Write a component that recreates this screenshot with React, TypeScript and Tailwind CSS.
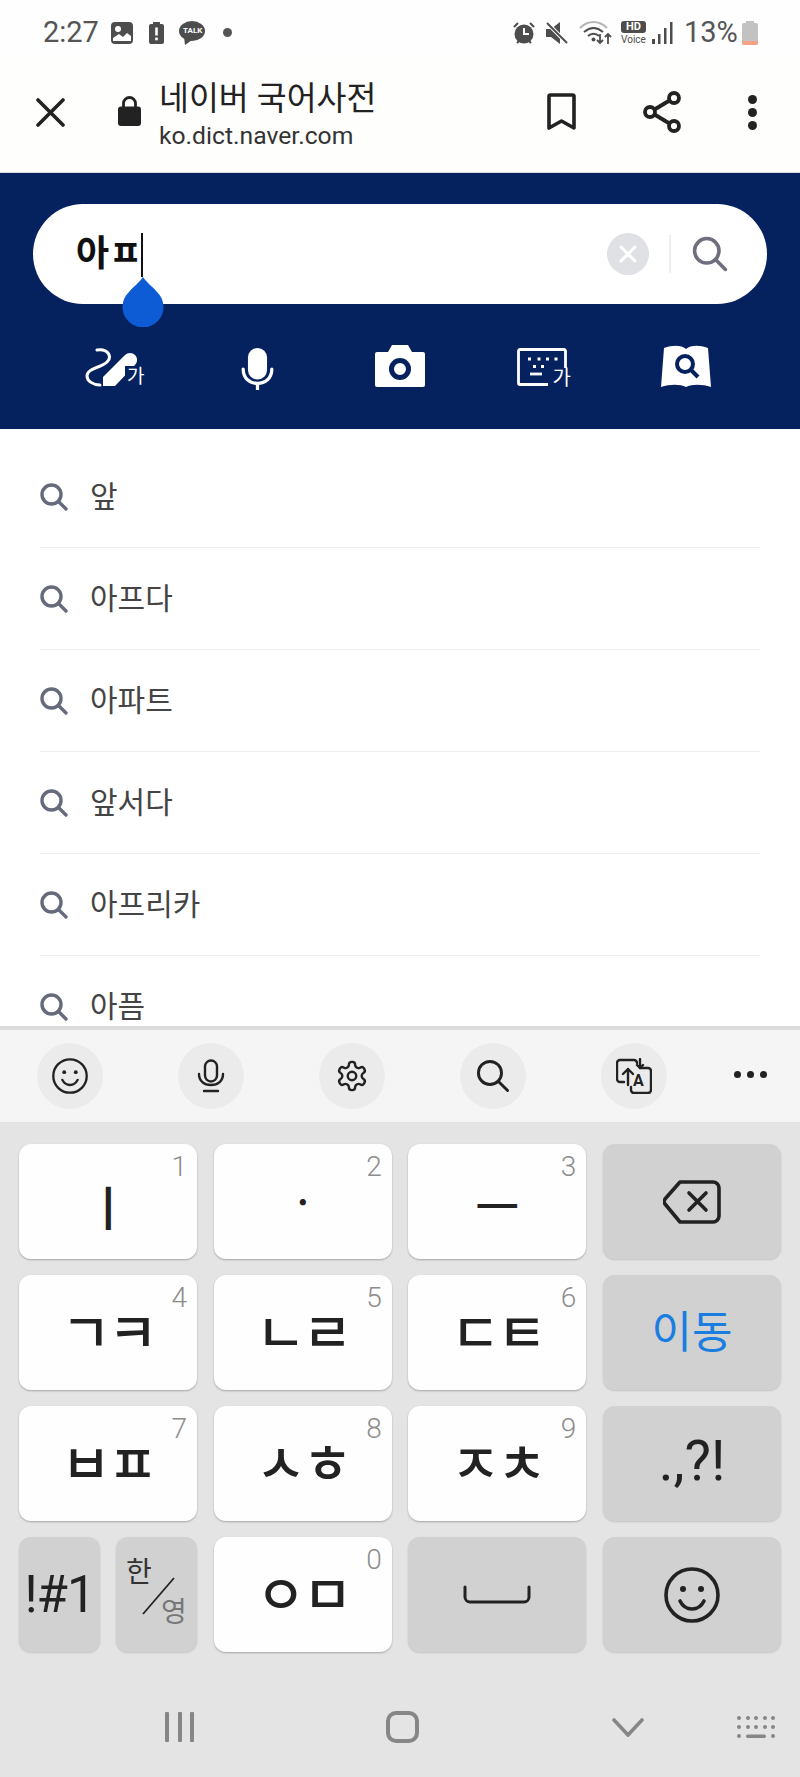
import React from "react";

const FONT = "font-['Roboto','Noto_Sans_CJK_KR',sans-serif]";

function SearchGlyph({ size = 28, color = "#666b7c", sw = 3.4 }: { size?: number; color?: string; sw?: number }) {
  return (
    <svg width={size} height={size} viewBox="0 0 28 28" fill="none" stroke={color} strokeWidth={sw} strokeLinecap="round">
      <circle cx="11.5" cy="11.5" r="9.5" />
      <path d="M18.5 18.5L26 26" />
    </svg>
  );
}

function Smile({ size, sw }: { size: number; sw: number }) {
  return (
    <svg width={size} height={size} viewBox="0 0 56 56" fill="none" stroke="#222" strokeWidth={sw} strokeLinecap="round">
      <circle cx="28" cy="28" r="26" />
      <circle cx="19" cy="22" r="3" fill="#222" stroke="none" />
      <circle cx="37" cy="22" r="3" fill="#222" stroke="none" />
      <path d="M16 34c3 6 8 8 12 8s9-2 12-8" />
    </svg>
  );
}

function Row({ text }: { text: string }) {
  return (
    <div className="h-[102px] mx-[40px] border-b border-[#eeeeee] flex items-center gap-[22px] shrink-0">
      <SearchGlyph />
      <span className="text-[30px] leading-none text-[#444444]">{text}</span>
    </div>
  );
}

function Key({ label, num, size = 54, spacing = "tracking-[-3px] mt-[4px]" }: { label: string; num: string; size?: number; spacing?: string }) {
  return (
    <div className="relative h-[115px] rounded-[12px] bg-[#fefefe] shadow-[0_1px_2px_rgba(0,0,0,0.28)] flex items-center justify-center">
      <span className={`text-[#222222] leading-none font-medium ${spacing}`} style={{ fontSize: size }}>{label}</span>
      <span className="absolute right-[10px] top-[6px] text-[28px] leading-[34px] font-light text-[#8c8c8c]">{num}</span>
    </div>
  );
}

function FnKey({ children, className = "" }: { children: React.ReactNode; className?: string }) {
  return (
    <div className={`relative h-[115px] rounded-[12px] bg-[#d1d1d1] shadow-[0_1px_2px_rgba(0,0,0,0.15)] flex items-center justify-center ${className}`}>
      {children}
    </div>
  );
}

function ToolCircle({ children }: { children: React.ReactNode }) {
  return <div className="w-[66px] h-[66px] rounded-full bg-[#ebebeb] flex items-center justify-center shrink-0">{children}</div>;
}

export default function App() {
  return (
    <div className={`${FONT} w-[800px] h-[1777px] flex flex-col overflow-hidden bg-white`}>
      {/* status bar */}
      <div className="h-[56px] bg-[#fefefe] flex items-center pl-[43px] pt-[9px] text-[#555555] shrink-0">
        <span className="text-[29px] leading-none w-[55px]">2:27</span>
        <svg className="ml-[13px]" width="22" height="22" viewBox="0 0 22 22">
          <rect width="22" height="22" rx="4" fill="#4d4d4d" />
          <circle cx="7" cy="7" r="3" fill="#fff" />
          <path d="M2 19v-3l6-4 4 3 4-4 4 3v5z" fill="#fff" />
        </svg>
        <svg className="ml-[16px]" width="15" height="22" viewBox="0 0 15 22">
          <path d="M4 0h7v2h2a2 2 0 012 2v16a2 2 0 01-2 2H2a2 2 0 01-2-2V4a2 2 0 012-2h2z" fill="#4d4d4d" />
          <rect x="6.2" y="5.5" width="2.6" height="8" fill="#fff" />
          <rect x="6.2" y="15.5" width="2.6" height="2.8" fill="#fff" />
        </svg>
        <div className="ml-[15px] relative w-[26px] h-[24px]">
          <svg width="26" height="24" viewBox="0 0 26 24">
            <ellipse cx="13" cy="10" rx="13" ry="10" fill="#4d4d4d" />
            <path d="M5 16l1 8 7-5z" fill="#4d4d4d" />
          </svg>
          <span className="absolute left-[4px] top-[5px] text-[8px] leading-[10px] font-bold text-white">TALK</span>
        </div>
        <div className="ml-[18px] w-[9px] h-[9px] rounded-full bg-[#555555]" />
        <div className="ml-auto flex items-center pr-[42px]">
          <svg width="22" height="24" viewBox="0 0 22 24">
            <circle cx="11" cy="13" r="9.5" fill="#4d4d4d" />
            <path d="M1 6l4-4M21 6l-4-4M4 22l2-2M18 22l-2-2" stroke="#4d4d4d" strokeWidth="2" />
            <path d="M11 7v6h5" stroke="#fff" strokeWidth="2" fill="none" />
          </svg>
          <svg className="ml-[11px]" width="22" height="24" viewBox="0 0 22 24">
            <path d="M0 8h5l9-7v22l-9-7H0z" fill="#4d4d4d" />
            <path d="M1 2l20 20" stroke="#fefefe" strokeWidth="4" />
            <path d="M1 2l20 20" stroke="#4d4d4d" strokeWidth="2" />
          </svg>
          <svg className="ml-[11px]" width="33" height="24" viewBox="0 0 33 24" fill="none">
            <path d="M1 7c8-8 19-8 27 0" stroke="#b5b5b5" strokeWidth="2" />
            <path d="M5 11c6-5 13-5 19 0" stroke="#4d4d4d" strokeWidth="2" />
            <path d="M9 15c3-3 8-3 11 0" stroke="#4d4d4d" strokeWidth="2" />
            <circle cx="14.5" cy="18.5" r="2" fill="#4d4d4d" />
            <path d="M21 13v9m-3-3l3 3 3-3M29 23v-10m-3 3l3-3 3 3" stroke="#4d4d4d" strokeWidth="1.8" />
          </svg>
          <div className="ml-[9px] w-[25px] flex flex-col items-center">
            <span className="w-[25px] h-[12px] rounded-[3px] bg-[#4d4d4d] text-white text-[11px] leading-[12px] font-bold text-center">HD</span>
            <span className="text-[10px] leading-[11px] mt-[1px] text-[#4d4d4d]">Voice</span>
          </div>
          <svg className="ml-[6px]" width="21" height="22" viewBox="0 0 21 22" fill="#4d4d4d">
            <rect x="0" y="17" width="3" height="5" />
            <rect x="6" y="12" width="2.5" height="10" />
            <rect x="12" y="6" width="2.5" height="16" />
            <rect x="18" y="0" width="2.5" height="22" />
          </svg>
          <span className="ml-[11px] text-[29px] leading-none w-[53px]">13%</span>
          <svg className="ml-[5px]" width="16" height="24" viewBox="0 0 16 24">
            <path d="M4 0h8v2h2a2 2 0 012 2v18a2 2 0 01-2 2H2a2 2 0 01-2-2V4a2 2 0 012-2h2z" fill="#c2c2c2" />
            <path d="M0 20h16v2a2 2 0 01-2 2H2a2 2 0 01-2-2z" fill="#f3a283" />
          </svg>
        </div>
      </div>

      {/* browser toolbar */}
      <div className="h-[117px] pb-[4px] bg-[#fefefd] border-b border-[#d6dade] flex items-center shrink-0 relative">
        <svg className="ml-[36px]" width="29" height="29" viewBox="0 0 29 29" stroke="#222" strokeWidth="3.6" strokeLinecap="round">
          <path d="M2 2l25 25M27 2L2 27" />
        </svg>
        <svg className="ml-[53px] mt-[-2px]" width="23" height="30" viewBox="0 0 23 30">
          <path d="M5.5 12V7.5a6 6 0 0112 0V12" fill="none" stroke="#222" strokeWidth="2.8" />
          <rect y="10.5" width="23" height="19.5" rx="3" fill="#222" />
        </svg>
        <div className="ml-[18px] mt-[6px] flex flex-col">
          <span className="text-[32.5px] leading-[38px] text-[#222222]">네이버 국어사전</span>
          <span className="text-[24.7px] leading-[28px] mt-[4px] text-[#333333]">ko.dict.naver.com</span>
        </div>
        <svg className="ml-auto" width="29" height="38" viewBox="0 0 29 38" fill="none" stroke="#222" strokeWidth="3.6">
          <path d="M2 35V3.5A1.5 1.5 0 013.5 2h22A1.5 1.5 0 0127 3.5V35l-12.5-7z" strokeLinejoin="round" />
        </svg>
        <svg className="ml-[67px]" width="38" height="42" viewBox="0 0 38 42" fill="none" stroke="#222" strokeWidth="3.8">
          <circle cx="7" cy="21" r="5" />
          <circle cx="31" cy="7" r="5" />
          <circle cx="31" cy="35" r="5" />
          <path d="M11.5 18.5l15-9M11.5 23.5l15 9" />
        </svg>
        <div className="ml-[67px] mr-[43px] flex flex-col gap-[4px]">
          <div className="w-[9px] h-[9px] rounded-full bg-[#222222]" />
          <div className="w-[9px] h-[9px] rounded-full bg-[#222222]" />
          <div className="w-[9px] h-[9px] rounded-full bg-[#222222]" />
        </div>
      </div>

      {/* search header */}
      <div className="h-[256px] bg-[#05225f] flex flex-col shrink-0 pt-[31px]">
        <div className="relative mx-[33px] h-[100px] rounded-full bg-white flex items-center pl-[43px] pr-[39px] shrink-0">
          <span className="text-[36px] leading-none font-bold text-[#111111]">아ㅍ</span>
          <div className="absolute left-[108px] top-[29px] w-[2px] h-[44px] bg-[#111111]" />
          <svg className="absolute left-[89px] top-[73px]" width="42" height="50" viewBox="0 0 42 50">
            <path d="M21 0c3 5 9 9 14 15a20.5 20.5 0 11-28 0C12 9 18 5 21 0z" fill="#0e5bd6" />
          </svg>
          <div className="ml-auto w-[42px] h-[42px] rounded-full bg-[#dfe1e5] flex items-center justify-center">
            <svg width="18" height="18" viewBox="0 0 18 18" stroke="#fff" strokeWidth="3" strokeLinecap="round">
              <path d="M2 2l14 14M16 2L2 16" />
            </svg>
          </div>
          <div className="ml-[20px] w-[2px] h-[38px] bg-[#eceef0]" />
          <div className="ml-[21px]">
            <SearchGlyph size={36} color="#6e6e7e" sw={2.8} />
          </div>
        </div>
        <div className="mt-[41px] px-[43px] grid grid-cols-5 h-[46px] text-white">
          <div className="relative pl-[42px] pt-[3px]">
            <svg width="52" height="40" viewBox="0 0 52 40" fill="none">
              <path d="M12 2C22 0 28 8 22 14 16 20 2 20 2 28c0 5 6 9 13 9" stroke="#fff" strokeWidth="3" strokeLinecap="round" />
              <path d="M18 29L40 7a7 7 0 0110 10L30 38H18z" fill="#fff" />
            </svg>
            <span className="absolute left-[82px] top-[21px] text-[19px] leading-[22px] bg-[#05225f] pl-[2px]">가</span>
          </div>
          <div className="flex justify-center pt-[3px]">
            <svg width="33" height="42" viewBox="0 0 34 44" fill="none">
              <rect x="7" y="0" width="20" height="33" rx="10" fill="#fff" />
              <path d="M2 22c0 10 7 15 15 15s15-5 15-15M17 37v7" stroke="#fff" strokeWidth="3.4" strokeLinecap="round" />
            </svg>
          </div>
          <div className="flex justify-center">
            <svg width="50" height="42" viewBox="0 0 50 42">
              <path fillRule="evenodd" d="M2 7h11l4-7h16l4 7h11a2 2 0 012 2v31a2 2 0 01-2 2H2a2 2 0 01-2-2V9a2 2 0 012-2zm23 6a11 11 0 100 22 11 11 0 000-22zm0 5a6 6 0 110 12 6 6 0 010-12z" fill="#fff" />
            </svg>
          </div>
          <div className="relative pl-[46px] pt-[3px]">
            <svg width="50" height="38" viewBox="0 0 50 38" fill="none">
              <path d="M31 36.5H3A1.5 1.5 0 011.5 35V3A1.5 1.5 0 013 1.5h44A1.5 1.5 0 0148.5 3v17" stroke="#fff" strokeWidth="2.8" />
              <path d="M11 11h3M20.5 11h3M29 11h3M37.5 11h3M16 18.5h3M24 18.5h3" stroke="#fff" strokeWidth="2.8" />
              <path d="M13 26h12" stroke="#fff" strokeWidth="2.8" />
            </svg>
            <span className="absolute left-[81px] top-[21px] text-[20px] leading-[24px]">가</span>
          </div>
          <div className="flex justify-center">
            <svg width="50" height="42" viewBox="0 0 50 42">
              <path d="M3 3c9-3 17-3 22 1 5-4 13-4 22-1l3 39c-9-3-19-3-25 0-6-3-16-3-25 0z" fill="#fff" />
              <circle cx="24" cy="19" r="8" fill="none" stroke="#05225f" strokeWidth="4" />
              <path d="M30 25l7 7" stroke="#05225f" strokeWidth="4" />
            </svg>
          </div>
        </div>
      </div>

      {/* suggestions */}
      <div className="flex-1 min-h-0 overflow-hidden bg-white pt-[17px] flex flex-col">
        {["앞", "아프다", "아파트", "앞서다", "아프리카"].map((t) => (
          <Row key={t} text={t} />
        ))}
        <div className="h-[102px] mx-[40px] flex items-center gap-[22px] shrink-0">
          <SearchGlyph />
          <span className="text-[30px] leading-none text-[#444444]">아픔</span>
        </div>
      </div>

      {/* keyboard */}
      <div className="h-[751px] bg-[#e4e4e4] flex flex-col shrink-0 border-t-[4px] border-[#dbdbdb]">
        <div className="h-[92px] bg-[#f5f5f5] flex items-center pl-[37px] gap-[75px] relative shrink-0">
          <ToolCircle><Smile size={36} sw={3.6} /></ToolCircle>
          <ToolCircle>
            <svg width="28" height="34" viewBox="0 0 28 34" fill="none" stroke="#222" strokeWidth="2.4" strokeLinecap="round">
              <rect x="8" y="1.5" width="12" height="21" rx="6" />
              <path d="M2 15c0 7 5 11 12 11s12-4 12-11M7 32h14" />
            </svg>
          </ToolCircle>
          <ToolCircle>
            <svg width="34" height="34" viewBox="0 0 24 24" fill="none" stroke="#222" strokeWidth="1.7" strokeLinecap="round" strokeLinejoin="round">
              <path d="M12.22 2h-.44a2 2 0 0 0-2 2v.18a2 2 0 0 1-1 1.73l-.43.25a2 2 0 0 1-2 0l-.15-.08a2 2 0 0 0-2.73.73l-.22.38a2 2 0 0 0 .73 2.73l.15.1a2 2 0 0 1 1 1.72v.51a2 2 0 0 1-1 1.74l-.15.09a2 2 0 0 0-.73 2.73l.22.38a2 2 0 0 0 2.73.73l.15-.08a2 2 0 0 1 2 0l.43.25a2 2 0 0 1 1 1.73V20a2 2 0 0 0 2 2h.44a2 2 0 0 0 2-2v-.18a2 2 0 0 1 1-1.73l.43-.25a2 2 0 0 1 2 0l.15.08a2 2 0 0 0 2.73-.73l.22-.39a2 2 0 0 0-.73-2.73l-.15-.08a2 2 0 0 1-1-1.74v-.5a2 2 0 0 1 1-1.74l.15-.09a2 2 0 0 0 .73-2.73l-.22-.38a2 2 0 0 0-2.73-.73l-.15.08a2 2 0 0 1-2 0l-.43-.25a2 2 0 0 1-1-1.73V4a2 2 0 0 0-2-2z" />
              <circle cx="12" cy="12" r="3" />
            </svg>
          </ToolCircle>
          <ToolCircle><SearchGlyph size={34} color="#222" sw={2.4} /></ToolCircle>
          <ToolCircle>
            <div className="relative w-[36px] h-[36px]">
              <svg width="36" height="36" viewBox="0 0 36 36" fill="none" stroke="#222" strokeWidth="2.4" strokeLinecap="round" strokeLinejoin="round">
                <path d="M8 24H4a3 3 0 01-3-3V5a3 3 0 013-3h14a3 3 0 013 3" />
                <path d="M24 10h8a3 3 0 013 3v19a3 3 0 01-3 3H18a3 3 0 01-3-3v-3" />
                <path d="M12 27V11m-5 5l5-5 5 5M24 1v9m-3-3l3 3 3-3" />
              </svg>
              <span className="absolute left-[17px] top-[14px] text-[16px] leading-[18px] font-bold text-[#222222]">A</span>
            </div>
          </ToolCircle>
          <div className="absolute right-[33px] top-[41px] flex gap-[6px]">
            <div className="w-[7px] h-[7px] rounded-full bg-[#222222]" />
            <div className="w-[7px] h-[7px] rounded-full bg-[#222222]" />
            <div className="w-[7px] h-[7px] rounded-full bg-[#222222]" />
          </div>
        </div>

        <div className="grid grid-cols-4 gap-x-[16.67px] gap-y-[16px] px-[19px] pt-[22px] shrink-0">
          <Key label="ㅣ" num="1" size={48} spacing="mt-[16px]" />
          <Key label="ㆍ" num="2" size={42} spacing="mt-[4px]" />
          <Key label="ㅡ" num="3" size={48} spacing="mt-[12px]" />
          <FnKey>
            <svg width="58" height="44" viewBox="0 0 58 44" fill="none" stroke="#222" strokeWidth="3.6" strokeLinejoin="round" strokeLinecap="round">
              <path d="M17 2h33a6 6 0 016 6v28a6 6 0 01-6 6H17L2 24a4 4 0 010-5z" />
              <path d="M26 13l17 17M43 13L26 30" />
            </svg>
          </FnKey>
          <Key label="ㄱㅋ" num="4" />
          <Key label="ㄴㄹ" num="5" />
          <Key label="ㄷㅌ" num="6" />
          <FnKey><span className="text-[44px] leading-none text-[#1a7ee0]">이동</span></FnKey>
          <Key label="ㅂㅍ" num="7" />
          <Key label="ㅅㅎ" num="8" />
          <Key label="ㅈㅊ" num="9" />
          <FnKey><span className="text-[56px] leading-none text-[#222222] mt-[-6px]">.,?!</span></FnKey>
          <div className="grid grid-cols-2 gap-x-[16px]">
            <FnKey><span className="text-[51px] leading-none text-[#222222] tracking-[-1px]">!#1</span></FnKey>
            <FnKey>
              <span className="absolute left-[10px] top-[21px] text-[28px] leading-[30px] text-[#333333]">한</span>
              <svg className="absolute left-[25px] top-[40px]" width="34" height="38" viewBox="0 0 34 38" stroke="#222" strokeWidth="1.8">
                <path d="M2 37L33 1" />
              </svg>
              <span className="absolute left-[45px] top-[61px] text-[28px] leading-[30px] text-[#777777]">영</span>
            </FnKey>
          </div>
          <Key label="ㅇㅁ" num="0" />
          <FnKey>
            <svg width="68" height="20" viewBox="0 0 68 20" fill="none" stroke="#222" strokeWidth="3" strokeLinecap="round">
              <path d="M2 2v10a5 5 0 005 5h54a5 5 0 005-5V2" />
            </svg>
          </FnKey>
          <FnKey><Smile size={56} sw={3.6} /></FnKey>
        </div>

        <div className="flex-1 flex items-center pl-[165px] pt-[25px]">
          <div className="flex gap-[8.5px]">
            <div className="w-[4px] h-[30px] rounded-[1px] bg-[#868686]" />
            <div className="w-[4px] h-[30px] rounded-[1px] bg-[#868686]" />
            <div className="w-[4px] h-[30px] rounded-[1px] bg-[#868686]" />
          </div>
          <div className="ml-[192px] w-[33px] h-[32px] rounded-[10px] border-[4px] border-[#868686]" />
          <svg className="ml-[193px]" width="32" height="19" viewBox="0 0 32 19" fill="none" stroke="#868686" strokeWidth="3.6" strokeLinecap="round">
            <path d="M2 2l14 15L30 2" />
          </svg>
          <svg className="ml-[92px]" width="40" height="24" viewBox="0 0 40 24" fill="#868686">
            <circle cx="3" cy="3" r="2" /><circle cx="12" cy="3" r="2" /><circle cx="20" cy="3" r="2" /><circle cx="29" cy="3" r="2" /><circle cx="37" cy="3" r="2" />
            <circle cx="3" cy="12" r="2" /><circle cx="12" cy="12" r="2" /><circle cx="20" cy="12" r="2" /><circle cx="29" cy="12" r="2" /><circle cx="37" cy="12" r="2" />
            <circle cx="3" cy="21" r="2" /><rect x="10" y="19.5" width="20" height="3.5" rx="1.75" /><circle cx="37" cy="21" r="2" />
          </svg>
        </div>
      </div>
    </div>
  );
}
